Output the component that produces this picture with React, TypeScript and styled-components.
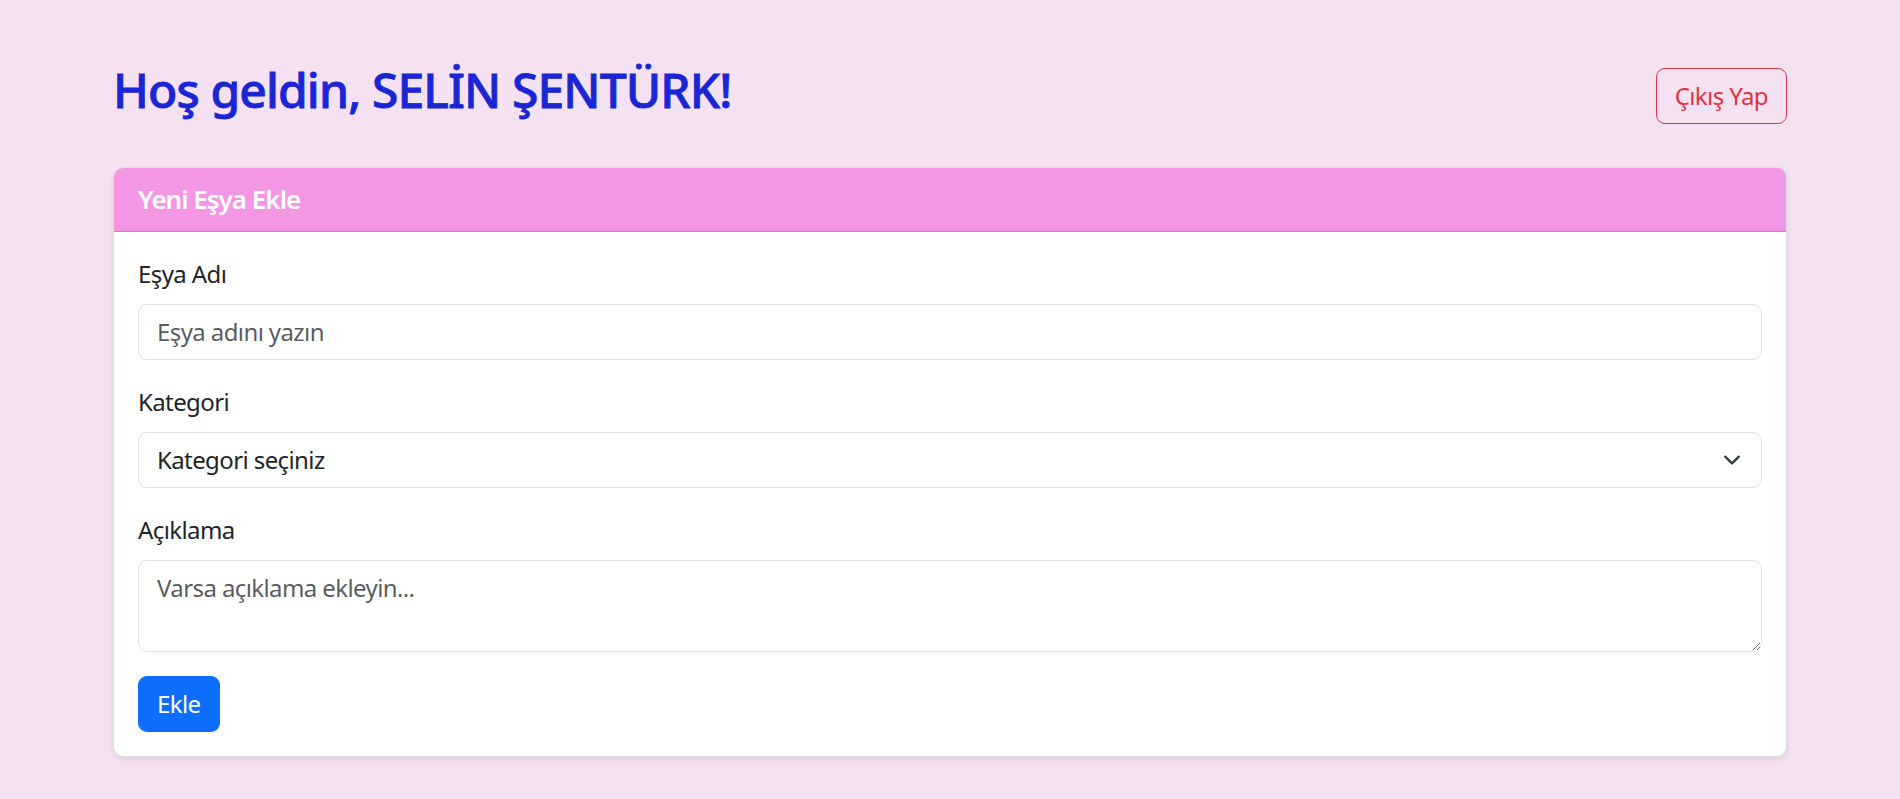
import React from "react";
import styled, { createGlobalStyle } from "styled-components";

const GlobalStyle = createGlobalStyle`
  *, *::before, *::after { box-sizing: border-box; }
  body {
    margin: 0;
    background: #f4e1f1;
    font-family: "Noto Sans", "Open Sans", sans-serif;
    font-size: 24px;
    line-height: 36px;
    letter-spacing: -0.6px;
    color: #212529;
  }
`;

const Container = styled.div`
  max-width: 1710px;
  margin: 0 auto;
  padding: 61px 18px 40px;
`;

const TopBar = styled.header`
  display: flex;
  justify-content: space-between;
  align-items: center;
  margin-bottom: 36px;
`;

const Title = styled.h2`
  margin: 0 0 12px;
  font-size: 48px;
  line-height: 58px;
  font-weight: 500;
  letter-spacing: -0.9px;
  color: #1a26d4;
  -webkit-text-stroke: 0.8px #1a26d4;
`;

const Button = styled.button<{ $variant: "primary" | "outline-danger" }>`
  font-family: inherit;
  font-size: 24px;
  line-height: 36px;
  letter-spacing: -0.6px;
  padding: 9px 18px;
  border-radius: 9px;
  cursor: pointer;
  border: 1px solid ${(p) => (p.$variant === "primary" ? "#0d6efd" : "#dc3545")};
  background: ${(p) => (p.$variant === "primary" ? "#0d6efd" : "transparent")};
  color: ${(p) => (p.$variant === "primary" ? "#ffffff" : "#dc3545")};
`;

const Card = styled.section`
  background: #ffffff;
  border: 1px solid rgba(0, 0, 0, 0.13);
  border-radius: 10px;
  overflow: hidden;
  box-shadow: 0 3px 6px rgba(0, 0, 0, 0.08);
`;

const CardHeader = styled.div`
  background: #f396e3;
  color: #ffffff;
  padding: 12px 24px;
  font-size: 26px;
  line-height: 39px;
  font-weight: 600;
  letter-spacing: -1px;
  border-bottom: 1px solid rgba(0, 0, 0, 0.15);
`;

const CardBody = styled.form`
  padding: 24px;
`;

const Field = styled.div`
  margin-bottom: 24px;
`;

const Label = styled.label`
  display: block;
  margin-bottom: 12px;
`;

const controlBase = `
  display: block;
  width: 100%;
  font-family: inherit;
  font-size: 24px;
  line-height: 36px;
  letter-spacing: -0.6px;
  color: #212529;
  background: #ffffff;
  border: 1px solid #dee2e6;
  border-radius: 9px;
  padding: 9px 18px;
  outline: none;
  &::placeholder { color: rgba(33, 37, 41, 0.75); }
`;

const Input = styled.input`
  ${controlBase}
`;

const TextArea = styled.textarea`
  ${controlBase}
  resize: vertical;
`;

const SelectWrap = styled.div`
  position: relative;
`;

const Select = styled.select`
  ${controlBase}
  appearance: none;
  -webkit-appearance: none;
  padding-right: 54px;
`;

const Chevron = styled.svg`
  position: absolute;
  right: 21px;
  top: 50%;
  transform: translateY(-50%);
  pointer-events: none;
`;

export default function App() {
  return (
    <>
      <GlobalStyle />
      <Container>
        <TopBar>
          <Title>Hoş geldin, SELİN ŞENTÜRK!</Title>
          <Button type="button" $variant="outline-danger">
            Çıkış Yap
          </Button>
        </TopBar>
        <Card>
          <CardHeader>Yeni Eşya Ekle</CardHeader>
          <CardBody onSubmit={(e) => e.preventDefault()}>
            <Field>
              <Label htmlFor="ad">Eşya Adı</Label>
              <Input id="ad" type="text" placeholder="Eşya adını yazın" />
            </Field>
            <Field>
              <Label htmlFor="kat">Kategori</Label>
              <SelectWrap>
                <Select id="kat" defaultValue="">
                  <option value="">Kategori seçiniz</option>
                  <option value="elektronik">Elektronik</option>
                  <option value="kitap">Kitap</option>
                  <option value="giyim">Giyim</option>
                </Select>
                <Chevron width="18" height="18" viewBox="0 0 16 16" fill="none">
                  <path
                    d="m2 5 6 6 6-6"
                    stroke="#343a40"
                    strokeWidth="2"
                    strokeLinecap="round"
                    strokeLinejoin="round"
                  />
                </Chevron>
              </SelectWrap>
            </Field>
            <Field>
              <Label htmlFor="aciklama">Açıklama</Label>
              <TextArea id="aciklama" rows={2} placeholder="Varsa açıklama ekleyin..." />
            </Field>
            <Button type="submit" $variant="primary">
              Ekle
            </Button>
          </CardBody>
        </Card>
      </Container>
    </>
  );
}
